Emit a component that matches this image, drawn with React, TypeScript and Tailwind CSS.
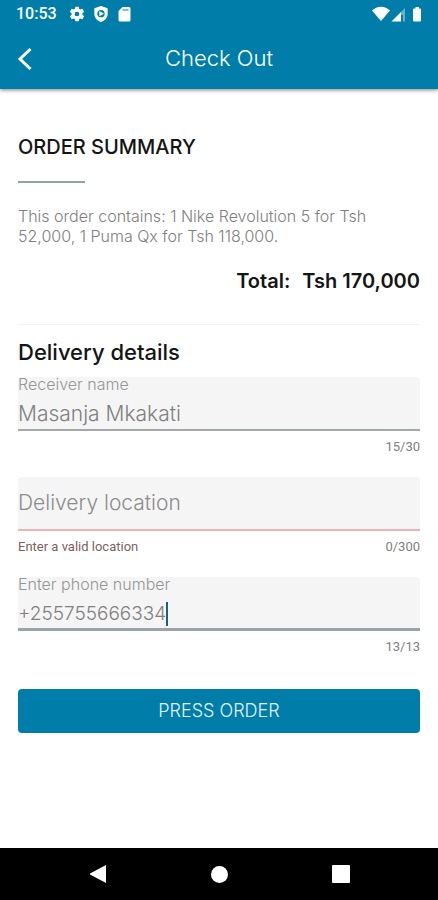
import * as React from "react";

type FieldProps = {
    id: string;
    label: string;
    value: string;
    max: number;
    type?: string;
    error?: string;
    focused?: boolean;
    onChange: (value: string) => void;
};

const StatusBar: React.FC = () => (
    <div className="flex h-7 items-center justify-between pl-4 pr-4 font-['Roboto',sans-serif]">
        <div className="flex items-center gap-3">
            <span className="text-base font-medium leading-5">10:53</span>
            <svg className="size-4" viewBox="0 0 24 24" fill="currentColor" aria-hidden="true">
                <path
                    fillRule="evenodd"
                    d="M9.500 1h5l.6 3.200 2 1.100 3-1.100 2.500 4.300-2.500 2.200v2.600l2.500 2.200-2.500 4.300-3-1.100-2 1.100-.6 3.200h-5l-.6-3.200-2-1.100-3 1.100L1.400 15.500l2.500-2.200v-2.600L1.400 8.500l2.500-4.300 3 1.100 2-1.100zM12 8.500a3.500 3.500 0 1 0 0 7 3.500 3.500 0 0 0 0-7z"
                />
            </svg>
            <svg className="h-4 w-4 -ml-1" viewBox="0 0 24 24" fill="currentColor" aria-hidden="true">
                <path
                    fillRule="evenodd"
                    d="M12 0l10 3.500v8c0 6-4.500 10.500-10 12.500-5.500-2-10-6.500-10-12.500v-8zM12 6a5.500 5.500 0 1 0 0 11 5.500 5.500 0 0 0 0-11zM9.500 7.500l7 4-7 4z"
                />
            </svg>
            <svg className="-ml-2 h-4 w-[22px]" viewBox="0 0 22 16" fill="currentColor" aria-hidden="true">
                <path
                    fillRule="evenodd"
                    d="M9.500 1H16a1.500 1.500 0 0 1 1.500 1.500v11.500a1.500 1.500 0 0 1-1.500 1.500H7a1.500 1.500 0 0 1-1.500-1.500V5zM9.500 3.500v1h6v-1z"
                />
            </svg>
        </div>
        <svg className="h-4 w-[50px]" viewBox="0 0 50 16" fill="currentColor" aria-hidden="true">
            <path d="M0 4.500C5-.6 13-.6 18 4.500L9 15z" />
            <path d="M19.500 15.500L29 6v9.500z" />
            <path d="M29 6l4-4v13.500h-2V9h-2z" opacity=".4" />
            <path d="M43.500 1h3.500v1.500h1a1 1 0 0 1 1 1V14.500a1 1 0 0 1-1 1h-6a1 1 0 0 1-1-1v-11a1 1 0 0 1 1-1h1.500z" />
        </svg>
    </div>
);

const Field: React.FC<FieldProps> = ({ id, label, value, max, type = "text", error, focused, onChange }) => {
    const border = error
        ? "border-b-2 border-[#eeb4b8]"
        : focused
            ? "border-b-[3px] border-[#98a6aa]"
            : "border-b-2 border-[#a3a8a8]";

    return (
        <div>
            <div className={`flex h-[54px] flex-col rounded-t bg-[#f5f5f5] ${border}`}>
                {value !== "" && (
                    <label htmlFor={id} className="text-base font-light leading-[14px] text-[#959595]">
                        {label}
                    </label>
                )}
                <div className={`flex grow items-center ${value !== "" ? "pt-2" : ""}`}>
                    <input
                        id={id}
                        type={type}
                        aria-label={label}
                        className={`min-w-0 bg-transparent font-light leading-6 text-[#808080] outline-none placeholder:text-[#8c8c8c] ${type === "tel" ? "text-[19px]" : "text-[21px]"} ${focused ? "field-sizing-content" : "w-full"}`}
                        value={value}
                        maxLength={max}
                        placeholder={label}
                        onChange={(e) => onChange(e.target.value)}
                    />
                    {focused && <span className="h-6 w-0.5 bg-[#1f5f78]" />}
                </div>
            </div>
            <div className="flex justify-between pt-2 font-['Roboto',sans-serif] text-[13px] leading-4">
                <span className="text-[#7d5f5f]">{error}</span>
                <span className="text-[#808080]">{value.length}/{max}</span>
            </div>
        </div>
    );
};

export default function App() {
    const [name, setName] = React.useState("Masanja Mkakati");
    const [location, setLocation] = React.useState("");
    const [phone, setPhone] = React.useState("+255755666334");

    return (
        <div className="flex min-h-screen flex-col bg-white font-['Inter',sans-serif]">
            <header className="bg-[#007ea9] text-white shadow-[0_1px_4px_rgba(0,0,0,0.5)]">
                <StatusBar />
                <div className="grid h-[61px] grid-cols-[1fr_auto_1fr] items-center px-4">
                    <button type="button" aria-label="Back" className="w-6">
                        <svg className="h-6 w-[18px]" viewBox="0 0 18 24" fill="none" stroke="currentColor" strokeWidth="3" aria-hidden="true">
                            <path d="M14.500 2L4 12l10.500 10" />
                        </svg>
                    </button>
                    <h1 className="text-[22px] font-light">Check Out</h1>
                </div>
            </header>

            <main className="flex grow flex-col px-[18px] pt-[46px]">
                <h2 className="text-xl font-medium leading-6 text-[#151515]">ORDER SUMMARY</h2>
                <div className="mt-[22px] h-0.5 w-[67px] bg-[#8fa5a6]" />
                <p className="mt-[23px] pr-6 text-base font-light leading-5 text-[#808080]">
                    This order contains: 1 Nike Revolution 5 for Tsh 52,000, 1 Puma Qx for Tsh 118,000.
                </p>
                <p className="mt-[21px] flex justify-end gap-3 text-xl font-semibold leading-7 text-[#151515]">
                    <span>Total:</span>
                    <span>Tsh 170,000</span>
                </p>
                <hr className="mt-[29px] border-[#f4f4f4]" />

                <h2 className="mt-[13px] text-[22px] font-medium leading-7 text-[#151515]">Delivery details</h2>
                <form className="mt-[11px] flex flex-col gap-[22px]" onSubmit={(e) => e.preventDefault()}>
                    <Field id="name" label="Receiver name" value={name} max={30} onChange={setName} />
                    <Field
                        id="location"
                        label="Delivery location"
                        value={location}
                        max={300}
                        error={location === "" ? "Enter a valid location" : undefined}
                        onChange={setLocation}
                    />
                    <Field
                        id="phone"
                        type="tel"
                        label="Enter phone number"
                        value={phone}
                        max={13}
                        focused
                        onChange={setPhone}
                    />
                    <button type="submit" className="mt-3 h-11 rounded bg-[#007ea9] text-lg font-light text-[#e3f4fa]">
                        PRESS ORDER
                    </button>
                </form>
            </main>

            <nav className="grid h-[52px] grid-cols-[1fr_auto_1fr] items-center gap-[104px] bg-black text-white">
                <button type="button" aria-label="Back" className="justify-self-end">
                    <svg className="size-[18px]" viewBox="0 0 18 18" fill="currentColor" aria-hidden="true">
                        <path d="M17 0v18L1 9.500v-1z" />
                    </svg>
                </button>
                <button type="button" aria-label="Home" className="size-[17px] rounded-full bg-white" />
                <button type="button" aria-label="Recent apps" className="size-[18px] rounded-[1px] bg-white" />
            </nav>
        </div>
    );
}
